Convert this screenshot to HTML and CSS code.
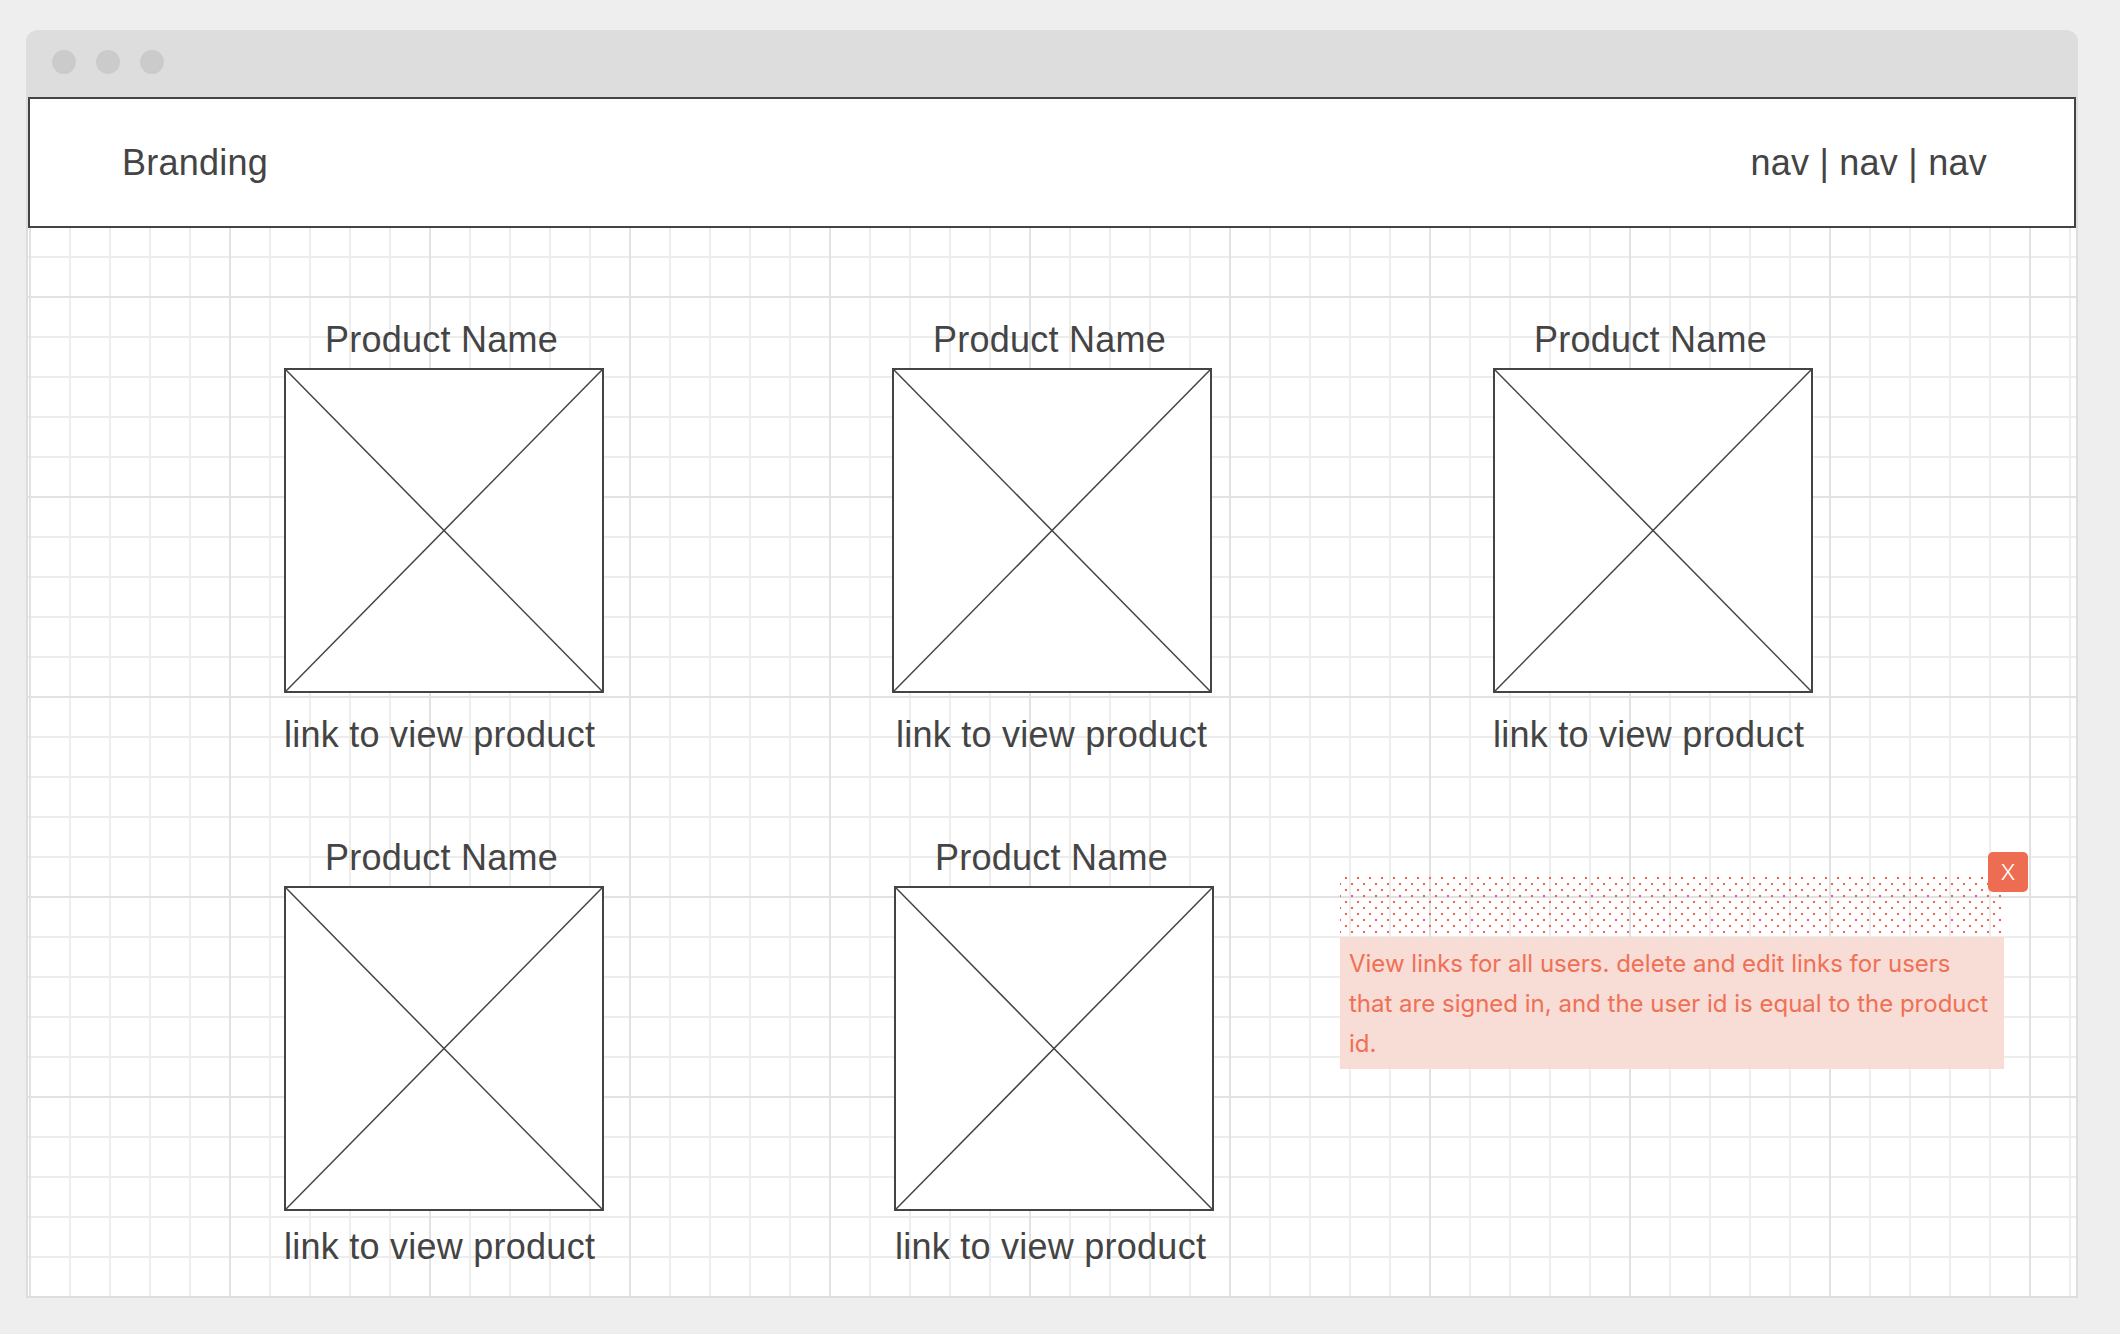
FILE: index.html
```html
<!DOCTYPE html>
<html lang="en">
<head>
<meta charset="utf-8">
<title>Products wireframe</title>
<link rel="stylesheet" href="styles.css">
</head>
<body>
<div class="window">
  <div class="titlebar">
    <span class="dot"></span><span class="dot"></span><span class="dot"></span>
  </div>
  <div class="content">
    <header class="site-header">
      <div class="brand">Branding</div>
      <nav class="nav">nav | nav | nav</nav>
    </header>
    <main class="canvas">
      <div class="products">
        <div class="product">
          <div class="product-name">Product Name</div>
          <div class="placeholder"><svg viewBox="0 0 100 100" preserveAspectRatio="none"><line x1="0" y1="0" x2="100" y2="100"/><line x1="100" y1="0" x2="0" y2="100"/></svg></div>
          <a class="product-link" href="#">link to view product</a>
        </div>
        <div class="product product--mid">
          <div class="product-name">Product Name</div>
          <div class="placeholder"><svg viewBox="0 0 100 100" preserveAspectRatio="none"><line x1="0" y1="0" x2="100" y2="100"/><line x1="100" y1="0" x2="0" y2="100"/></svg></div>
          <a class="product-link" href="#">link to view product</a>
        </div>
        <div class="product">
          <div class="product-name">Product Name</div>
          <div class="placeholder"><svg viewBox="0 0 100 100" preserveAspectRatio="none"><line x1="0" y1="0" x2="100" y2="100"/><line x1="100" y1="0" x2="0" y2="100"/></svg></div>
          <a class="product-link" href="#">link to view product</a>
        </div>
        <div class="product product--tight">
          <div class="product-name">Product Name</div>
          <div class="placeholder"><svg viewBox="0 0 100 100" preserveAspectRatio="none"><line x1="0" y1="0" x2="100" y2="100"/><line x1="100" y1="0" x2="0" y2="100"/></svg></div>
          <a class="product-link" href="#">link to view product</a>
        </div>
        <div class="product product--tight product--nudge">
          <div class="product-name">Product Name</div>
          <div class="placeholder"><svg viewBox="0 0 100 100" preserveAspectRatio="none"><line x1="0" y1="0" x2="100" y2="100"/><line x1="100" y1="0" x2="0" y2="100"/></svg></div>
          <a class="product-link" href="#">link to view product</a>
        </div>
      </div>
      <aside class="note">
        <div class="note-pattern"></div>
        <div class="note-body">View links for all users. delete and edit links for users<br>that are signed in, and the user id is equal to the product<br>id.</div>
        <button class="note-close" type="button">X</button>
      </aside>
    </main>
  </div>
</div>
</body>
</html>
```
FILE: styles.css
```css
html, body {
  margin: 0;
  background: #eeeeee;
}

body {
  padding: 30px 0 0 26px;
  height: 1334px;
  box-sizing: border-box;
  overflow: hidden;
  font-family: "Liberation Sans", Arial, sans-serif;
  color: #444444;
}

.window {
  width: 2052px;
  height: 1268px;
  box-sizing: border-box;
  padding: 0 2px 2px;
  background: #dddddd;
  border-radius: 12px 12px 0 0;
  display: flex;
  flex-direction: column;
}

.titlebar {
  height: 67px;
  flex: none;
  box-sizing: border-box;
  display: flex;
  align-items: center;
  gap: 20px;
  padding: 0 0 3px 24px;
}

.dot {
  width: 24px;
  height: 24px;
  border-radius: 50%;
  background: #cbcbcb;
}

.content {
  flex: 1;
  display: flex;
  flex-direction: column;
  background-color: #ffffff;
  background-image:
    linear-gradient(to right, #e2e2e2 2px, transparent 2px),
    linear-gradient(to bottom, #e2e2e2 2px, transparent 2px),
    linear-gradient(to right, #ededed 2px, transparent 2px),
    linear-gradient(to bottom, #ededed 2px, transparent 2px);
  background-size: 200px 200px, 200px 200px, 40px 40px, 40px 40px;
  background-position: 1px -1px, 1px -1px, 1px -1px, 1px -1px;
}

.site-header {
  height: 131px;
  flex: none;
  box-sizing: border-box;
  border: 2px solid #444444;
  background: #ffffff;
  display: flex;
  align-items: center;
  justify-content: space-between;
  padding: 0 87px 0 92px;
  font-size: 36px;
  line-height: 40px;
  letter-spacing: 0.25px;
}

.canvas {
  flex: 1;
  position: relative;
}

.products {
  display: grid;
  grid-template-columns: 608px 601px 320px;
  row-gap: 83px;
  padding: 92px 0 0 256px;
}

.product {
  width: 320px;
  display: flex;
  flex-direction: column;
}

.product--nudge {
  margin-left: 2px;
}

.product-name {
  font-size: 36px;
  line-height: 40px;
  letter-spacing: 0.25px;
  text-align: center;
  padding-right: 5px;
  margin-bottom: 8px;
}

.placeholder {
  height: 325px;
  box-sizing: border-box;
  border: 2px solid #444444;
  background: #ffffff;
}

.placeholder svg {
  display: block;
  width: 100%;
  height: 100%;
}

.placeholder line {
  stroke: #444444;
  stroke-width: 1.5;
  vector-effect: non-scaling-stroke;
}

.product-link {
  margin-top: 22px;
  font-size: 36px;
  line-height: 40px;
  letter-spacing: 0.25px;
  color: #444444;
  text-decoration: none;
  white-space: nowrap;
}

.product--tight .product-link {
  margin-top: 16px;
}

.product--mid .product-link {
  margin-left: 4px;
}

.product--nudge .product-link {
  margin-left: 1px;
}

.note {
  position: absolute;
  left: 1312px;
  top: 647px;
  width: 664px;
}

.note-pattern {
  width: 662px;
  height: 62px;
  background-image:
    radial-gradient(circle, #ee6749 1px, transparent 1.6px),
    radial-gradient(circle, #ee6749 1px, transparent 1.6px);
  background-size: 12px 12px;
  background-position: 0 -3px, 6px 3px;
}

.note-body {
  background: #f8dcd6;
  padding: 7px 9px 5px;
  font-family: Inter, "Noto Sans", sans-serif;
  font-size: 24px;
  line-height: 40px;
  color: #ef7055;
  white-space: nowrap;
}

.note-close {
  position: absolute;
  top: -23px;
  right: -24px;
  width: 40px;
  height: 40px;
  border: none;
  border-radius: 5px;
  background: #ee6c51;
  color: #ffffff;
  font-family: Inter, "Noto Sans", sans-serif;
  font-weight: 300;
  font-size: 22px;
  line-height: 1;
  padding: 0;
  display: flex;
  align-items: center;
  justify-content: center;
}
```
